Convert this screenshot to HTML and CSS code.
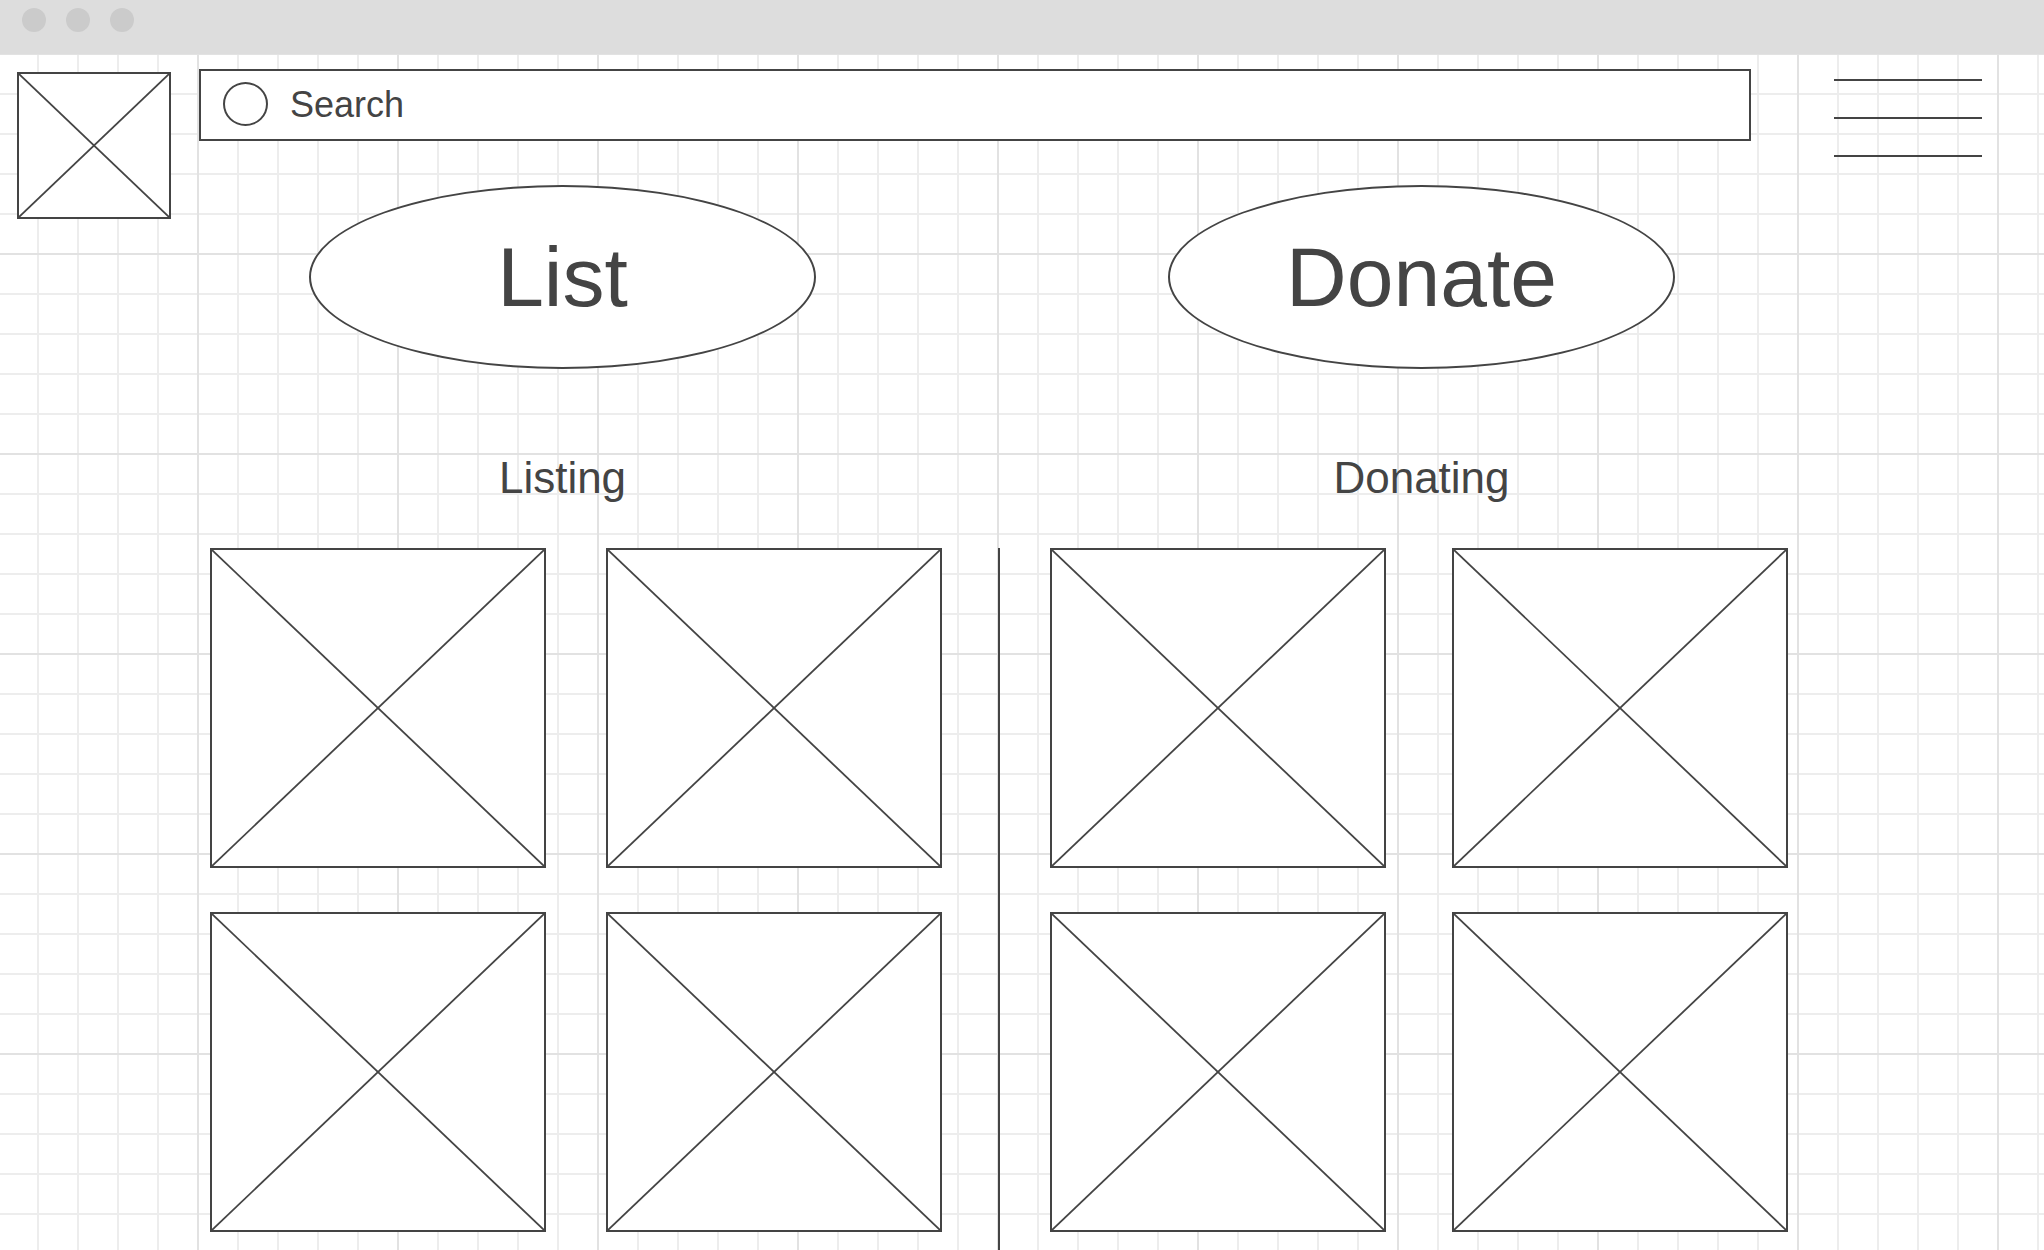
FILE: index.html
```html
<!DOCTYPE html>
<html lang="en">
<head>
<meta charset="utf-8">
<title>Wireframe</title>
<link rel="stylesheet" href="styles.css">
</head>
<body>
<div class="titlebar">
  <span class="dot"></span><span class="dot"></span><span class="dot"></span>
</div>
<div class="canvas">
  <aside class="side">
    <div class="ph logo">
      <svg viewBox="0 0 100 100" preserveAspectRatio="none"><line x1="0" y1="0" x2="100" y2="100"/><line x1="100" y1="0" x2="0" y2="100"/></svg>
    </div>
  </aside>
  <main class="main">
    <div class="topbar">
      <div class="search">
        <span class="search-icon"></span>
        <span class="search-text">Search</span>
      </div>
      <div class="menu">
        <span class="bar"></span><span class="bar"></span><span class="bar"></span>
      </div>
    </div>
    <div class="actions">
      <div class="action">
        <div class="oval">List</div>
        <div class="label">Listing</div>
      </div>
      <div class="action">
        <div class="oval">Donate</div>
        <div class="label">Donating</div>
      </div>
    </div>
    <div class="tiles">
      <div class="group group-left">
        <div class="ph tile"><svg viewBox="0 0 100 100" preserveAspectRatio="none"><line x1="0" y1="0" x2="100" y2="100"/><line x1="100" y1="0" x2="0" y2="100"/></svg></div>
        <div class="ph tile"><svg viewBox="0 0 100 100" preserveAspectRatio="none"><line x1="0" y1="0" x2="100" y2="100"/><line x1="100" y1="0" x2="0" y2="100"/></svg></div>
        <div class="ph tile"><svg viewBox="0 0 100 100" preserveAspectRatio="none"><line x1="0" y1="0" x2="100" y2="100"/><line x1="100" y1="0" x2="0" y2="100"/></svg></div>
        <div class="ph tile"><svg viewBox="0 0 100 100" preserveAspectRatio="none"><line x1="0" y1="0" x2="100" y2="100"/><line x1="100" y1="0" x2="0" y2="100"/></svg></div>
      </div>
      <div class="divider"></div>
      <div class="group group-right">
        <div class="ph tile"><svg viewBox="0 0 100 100" preserveAspectRatio="none"><line x1="0" y1="0" x2="100" y2="100"/><line x1="100" y1="0" x2="0" y2="100"/></svg></div>
        <div class="ph tile"><svg viewBox="0 0 100 100" preserveAspectRatio="none"><line x1="0" y1="0" x2="100" y2="100"/><line x1="100" y1="0" x2="0" y2="100"/></svg></div>
        <div class="ph tile"><svg viewBox="0 0 100 100" preserveAspectRatio="none"><line x1="0" y1="0" x2="100" y2="100"/><line x1="100" y1="0" x2="0" y2="100"/></svg></div>
        <div class="ph tile"><svg viewBox="0 0 100 100" preserveAspectRatio="none"><line x1="0" y1="0" x2="100" y2="100"/><line x1="100" y1="0" x2="0" y2="100"/></svg></div>
      </div>
    </div>
  </main>
</div>
</body>
</html>
```

FILE: styles.css
```css
* { box-sizing: border-box; }

html, body {
  margin: 0;
  padding: 0;
  height: 100%;
  overflow: hidden;
}

body {
  font-family: "Liberation Sans", Arial, sans-serif;
  color: #444444;
  background: #ffffff;
}

.titlebar {
  height: 54px;
  background: #dddddd;
  display: flex;
  align-items: flex-start;
  gap: 20px;
  padding-left: 22px;
  padding-top: 8px;
}

.dot {
  width: 24px;
  height: 24px;
  border-radius: 50%;
  background: #cbcbcb;
}

.canvas {
  height: 1196px;
  display: flex;
  align-items: flex-start;
  padding-left: 17px;
  overflow: hidden;
  background-color: #ffffff;
  background-image:
    linear-gradient(to right, #e2e2e2 2px, transparent 2px),
    linear-gradient(to bottom, #e2e2e2 2px, transparent 2px),
    linear-gradient(to right, #ededed 2px, transparent 2px),
    linear-gradient(to bottom, #ededed 2px, transparent 2px);
  background-size: 200px 200px, 200px 200px, 40px 40px, 40px 40px;
  background-position: 197px -1px, 0 -1px, 37px 0, 0 -1px;
}

.ph {
  border: 2px solid #444444;
  background: #ffffff;
}

.ph svg {
  display: block;
  width: 100%;
  height: 100%;
}

.ph line {
  stroke: #444444;
  stroke-width: 1.8;
  vector-effect: non-scaling-stroke;
}

.side {
  width: 154px;
  flex: none;
  padding-top: 18px;
}

.logo {
  width: 154px;
  height: 147px;
}

.main {
  margin-left: 28px;
  flex: none;
}

.topbar {
  display: flex;
  align-items: flex-start;
  height: 72px;
  margin-top: 15px;
}

.search {
  width: 1552px;
  height: 72px;
  border: 2px solid #444444;
  background: #ffffff;
  display: flex;
  align-items: center;
  padding-left: 22px;
}

.search-icon {
  width: 45px;
  height: 44px;
  border: 2px solid #444444;
  border-radius: 50%;
  margin-top: -2px;
}

.search-text {
  font-size: 36px;
  line-height: 1;
  margin-left: 22px;
}

.menu {
  margin-left: 83px;
  margin-top: 10px;
  width: 148px;
  display: flex;
  flex-direction: column;
  gap: 36px;
}

.bar {
  display: block;
  height: 2px;
  flex: none;
  background: #444444;
}

.actions {
  display: flex;
  gap: 352px;
  margin-top: 44px;
  padding-left: 110px;
}

.action {
  width: 507px;
  display: flex;
  flex-direction: column;
  align-items: center;
}

.oval {
  width: 507px;
  height: 184px;
  border: 2px solid #444444;
  border-radius: 50%;
  background: #ffffff;
  display: flex;
  align-items: center;
  justify-content: center;
  font-size: 84px;
  line-height: 1;
}

.label {
  margin-top: 84px;
  font-size: 44px;
  line-height: 50px;
  text-align: center;
}

.tiles {
  display: flex;
  margin-top: 45px;
  padding-left: 11px;
}

.group {
  display: grid;
  grid-template-columns: 336px 336px;
  grid-auto-rows: 320px;
  row-gap: 44px;
  padding-bottom: 18px;
}

.group-left {
  column-gap: 60px;
}

.group-right {
  column-gap: 66px;
  margin-left: 50px;
}

.divider {
  width: 2px;
  margin-left: 56px;
  background: #444444;
  align-self: stretch;
}
```
